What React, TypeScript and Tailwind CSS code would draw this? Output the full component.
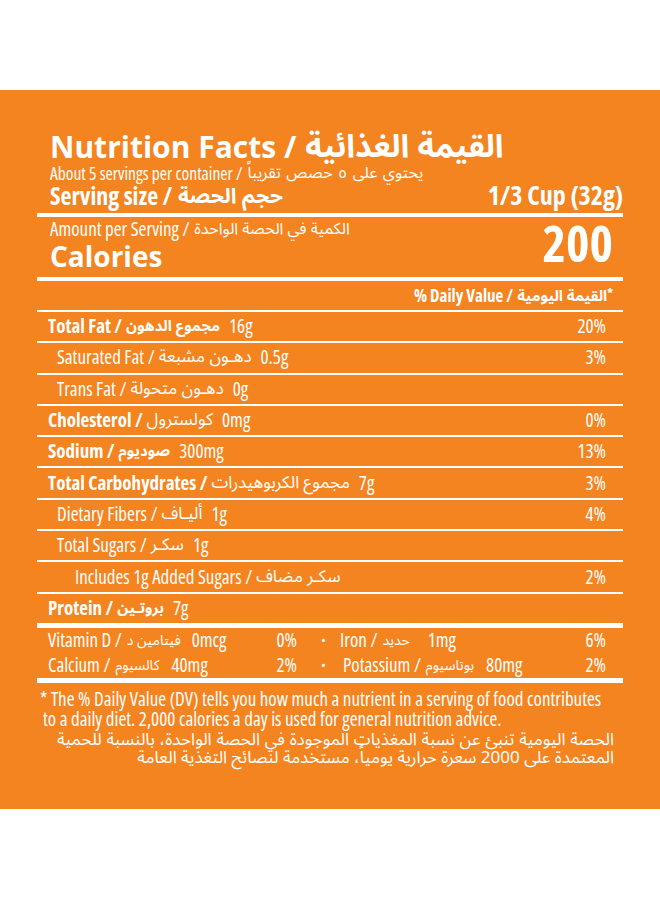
const COND = "font-[family-name:'Open_Sans','Noto_Sans_Arabic',sans-serif] font-stretch-condensed";
const WIDE = "font-[family-name:'Open_Sans','Noto_Sans_Arabic',sans-serif]";
const AR = "font-[family-name:'Noto_Sans_Arabic','DejaVu_Sans',sans-serif]";

interface Nutrient {
  en: string;
  ar: string;
  value?: string;
  pct?: string;
  indent?: 0 | 1 | 2;
  bold?: boolean;
  arBold?: boolean;
}

const nutrients: Nutrient[] = [
  { en: "Total Fat", ar: "مجموع الدهون", value: "16g", pct: "20%", bold: true, arBold: true },
  { en: "Saturated Fat", ar: "دهـون مشبعة", value: "0.5g", pct: "3%", indent: 1 },
  { en: "Trans Fat", ar: "دهـون متحولة", value: "0g", indent: 1 },
  { en: "Cholesterol", ar: "كولسترول", value: "0mg", pct: "0%", bold: true },
  { en: "Sodium", ar: "صوديوم", value: "300mg", pct: "13%", bold: true, arBold: true },
  { en: "Total Carbohydrates", ar: "مجموع الكربوهيدرات", value: "7g", pct: "3%", bold: true },
  { en: "Dietary Fibers", ar: "أليـاف", value: "1g", pct: "4%", indent: 1 },
  { en: "Total Sugars", ar: "سكـر", value: "1g", indent: 1 },
  { en: "Includes 1g Added Sugars", ar: "سكـر مضاف", pct: "2%", indent: 2 },
  { en: "Protein", ar: "بروتـين", value: "7g", bold: true, arBold: true },
];

const INDENT = ["pl-[11px]", "pl-[20px]", "pl-[38px]"];

function NutrientRow({ n }: { n: Nutrient }) {
  return (
    <div className="flex h-[31.3px] items-center border-t-2 border-white pr-[17px]">
      <div className={`flex items-center ${INDENT[n.indent ?? 0]}`}>
        <span className={`${COND} text-[19px] leading-[19px] ${n.bold ? "font-bold" : ""}`}>{n.en} /</span>
        <span
          className={`${AR} ml-[4px] leading-[19px] ${n.arBold ? "text-[15px] font-bold" : "text-[17px]"}`}
        >
          {n.ar}
        </span>
      </div>
      {n.value && (
        <span className={`${COND} ml-[9px] text-[19px] leading-[19px]`}>{n.value}</span>
      )}
      <span className={`${COND} ml-auto text-[19px] leading-[19px]`}>{n.pct}</span>
    </div>
  );
}

function Mineral({ en, ar, value, gap }: { en: string; ar: string; value: string; gap: string }) {
  return (
    <div className="flex items-center">
      <span className={`${COND} text-[19px] leading-[25px]`}>{en} /</span>
      <span className={`${AR} ml-[5px] text-[14px] leading-[25px]`}>{ar}</span>
      <span className={`${COND} ${gap} text-[19px] leading-[25px]`}>{value}</span>
    </div>
  );
}

export default function App() {
  return (
    <div className="min-h-[900px] bg-white pt-[90px]">
      <div className="h-[719px] bg-[#f38420] px-[37px] pt-[41px] text-white">
        {/* Header */}
        <div className="flex h-[32px] items-center gap-[9px] pl-[13px] font-bold">
          <span className={`${WIDE} text-[30px] leading-[32px]`}>Nutrition Facts /</span>
          <span className={`${AR} text-[32px] leading-[32px]`}>القيمة الغذائية</span>
        </div>
        <div className="flex items-end justify-between">
          <div className="pl-[13px]">
            <div className="flex h-[20px] items-center">
              <span className={`${COND} text-[17.5px] leading-[20px]`}>About 5 servings per container /</span>
              <span
                dir="rtl"
                className={`${AR} ml-[5px] w-[176px] whitespace-nowrap text-[16px] leading-[20px] [text-align-last:justify]`}
              >
                يحتوي على ٥ حصص تقريباً
              </span>
            </div>
            <div className="mt-[1px] flex h-[24px] items-center font-bold">
              <span className={`${COND} text-[24px] leading-[24px]`}>Serving size /</span>
              <span className={`${AR} ml-[6px] text-[21px] leading-[24px]`}>حجم الحصة</span>
            </div>
          </div>
          <span className={`${COND} text-[26px] font-bold leading-[26px]`}>1/3 Cup (32g)</span>
        </div>
        <div className="mt-[5px] h-[4px] bg-white" />

        {/* Calories */}
        <div className="flex items-start justify-between pt-[2px] pl-[13px] pr-[10px]">
          <div>
            <div className="flex h-[20px] items-center">
              <span className={`${COND} text-[19px] leading-[20px]`}>Amount per Serving /</span>
              <span className={`${AR} ml-[5px] text-[16px] leading-[20px]`}>الكمية في الحصة الواحدة</span>
            </div>
            <div className={`${WIDE} mt-[2px] text-[28px] font-bold leading-[30px]`}>Calories</div>
          </div>
          <span className={`${COND} -mt-[1px] text-[50px] font-bold leading-[50px]`}>200</span>
        </div>
        <div className="mt-[6px] h-[4px] bg-white" />

        {/* Daily value header */}
        <div className="flex h-[29px] items-center justify-end pr-[10px] font-bold">
          <span className={`${COND} text-[17px] leading-[18px]`}>% Daily Value /</span>
          <span className={`${AR} ml-[4px] text-[15px] leading-[18px]`}>القيمة اليومية</span>
          <span className={`${COND} self-start pt-[6px] text-[13px] leading-[13px]`}>*</span>
        </div>

        {nutrients.map((n) => (
          <NutrientRow key={n.en} n={n} />
        ))}
        <div className="h-[5px] bg-white" />

        {/* Vitamins & minerals */}
        <div className="flex h-[50px] pl-[11px]">
          <div className="w-[249px]">
            <div className="flex items-center justify-between">
              <Mineral en="Vitamin D" ar="فيتامين د" value="0mcg" gap="ml-[11px]" />
              <span className={`${COND} text-[19px] leading-[25px]`}>0%</span>
            </div>
            <div className="flex items-center justify-between">
              <Mineral en="Calcium" ar="كالسيوم" value="40mg" gap="ml-[12px]" />
              <span className={`${COND} text-[19px] leading-[25px]`}>2%</span>
            </div>
          </div>
          <div className="flex w-[43px] flex-col items-center pl-[10px]">
            <span className="text-[13px] leading-[25px]">•</span>
            <span className="text-[13px] leading-[25px]">•</span>
          </div>
          <div className="flex-1 pr-[17px]">
            <div className="flex items-center justify-between">
              <Mineral en="Iron" ar="حديد" value="1mg" gap="ml-[18px]" />
              <span className={`${COND} text-[19px] leading-[25px]`}>6%</span>
            </div>
            <div className="flex items-center justify-between pl-[3px]">
              <Mineral en="Potassium" ar="بوتاسيوم" value="80mg" gap="ml-[12px]" />
              <span className={`${COND} text-[19px] leading-[25px]`}>2%</span>
            </div>
          </div>
        </div>
        <div className="h-[5px] bg-white" />

        {/* Footnote */}
        <div className={`${COND} pt-[6px] pl-[3px] text-[19px] leading-[20px]`}>
          <div>* The % Daily Value (DV) tells you how much a nutrient in a serving of food contributes</div>
          <div className="pl-[3px]">to a daily diet. 2,000 calories a day is used for general nutrition advice.</div>
        </div>
        <div dir="rtl" className={`${AR} mt-[2px] pr-[9px] pl-[20px] text-right text-[17px] leading-[18px]`}>
          <div className="[text-align-last:justify]">
            الحصة اليومية تنبئ عن نسبة المغذيات الموجودة في الحصة الواحدة، بالنسبة للحمية
          </div>
          <div>المعتمدة على 2000 سعرة حرارية يومياً، مستخدمة لنصائح التغذية العامة</div>
        </div>
      </div>
    </div>
  );
}
